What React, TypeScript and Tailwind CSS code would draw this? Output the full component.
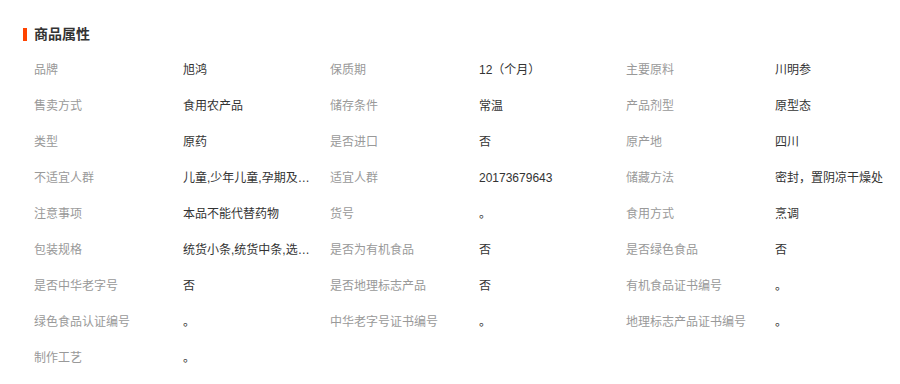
import React from 'react';

const attrs: [string, string][] = [
  ['品牌', '旭鸿'],
  ['保质期', '12（个月）'],
  ['主要原料', '川明参'],
  ['售卖方式', '食用农产品'],
  ['储存条件', '常温'],
  ['产品剂型', '原型态'],
  ['类型', '原药'],
  ['是否进口', '否'],
  ['原产地', '四川'],
  ['不适宜人群', '儿童,少年儿童,孕期及哺乳期妇女'],
  ['适宜人群', '20173679643'],
  ['储藏方法', '密封，置阴凉干燥处'],
  ['注意事项', '本品不能代替药物'],
  ['货号', '。'],
  ['食用方式', '烹调'],
  ['包装规格', '统货小条,统货中条,选货大条'],
  ['是否为有机食品', '否'],
  ['是否绿色食品', '否'],
  ['是否中华老字号', '否'],
  ['是否地理标志产品', '否'],
  ['有机食品证书编号', '。'],
  ['绿色食品认证编号', '。'],
  ['中华老字号证书编号', '。'],
  ['地理标志产品证书编号', '。'],
  ['制作工艺', '。'],
];

const App: React.FC = () => {
  return (
    <div
      className="w-[900px] h-[384px] bg-white overflow-hidden"
      style={{ fontFamily: '"Liberation Sans", "Noto Sans CJK SC", sans-serif' }}
    >
      <div className="flex items-center h-5 mt-6 pl-[23px]">
        <span className="w-[4px] h-[13px] bg-[#ff4400]" />
        <h2 className="ml-[7px] text-[14px] font-bold text-[#333] leading-5">商品属性</h2>
      </div>
      <div className="grid grid-cols-[296px_296px_296px] pl-[34px] mt-[8px]">
        {attrs.map(([label, value]) => (
          <div key={label} className="flex items-center h-9 text-[12px]">
            <span className="w-[149px] shrink-0 text-[#999] whitespace-nowrap">{label}</span>
            <span className="w-[127px] text-[#333] truncate">{value}</span>
          </div>
        ))}
      </div>
    </div>
  );
};

export default App;
